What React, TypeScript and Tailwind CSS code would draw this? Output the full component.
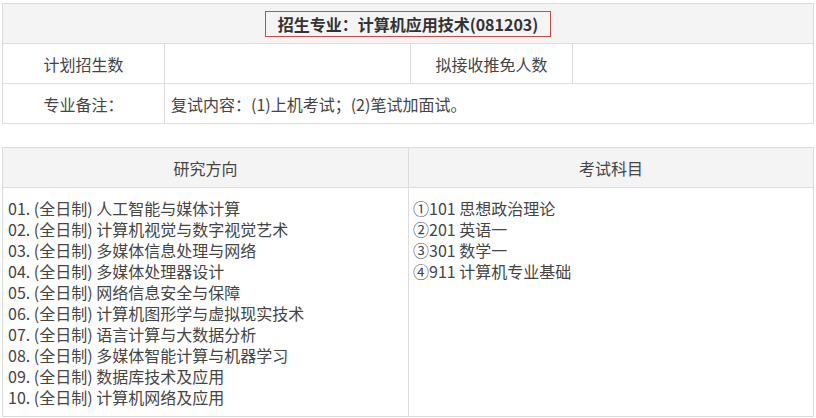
import React from "react";

const font = { fontFamily: '"Noto Sans CJK SC", "Noto Sans", sans-serif' };

const directions = [
  "01. (全日制) 人工智能与媒体计算",
  "02. (全日制) 计算机视觉与数字视觉艺术",
  "03. (全日制) 多媒体信息处理与网络",
  "04. (全日制) 多媒体处理器设计",
  "05. (全日制) 网络信息安全与保障",
  "06. (全日制) 计算机图形学与虚拟现实技术",
  "07. (全日制) 语言计算与大数据分析",
  "08. (全日制) 多媒体智能计算与机器学习",
  "09. (全日制) 数据库技术及应用",
  "10. (全日制) 计算机网络及应用",
];

const subjects = ["①101 思想政治理论", "②201 英语一", "③301 数学一", "④911 计算机专业基础"];

export default function App() {
  return (
    <div
      className="w-[816px] h-[418px] bg-white pl-[2px] pr-[2px] pt-[3px] text-[16px] text-[#444]"
      style={font}
    >
      {/* top table */}
      <div className="border border-[#dcdcdc]">
        <div className="h-[40px] bg-[#f4f4f4] flex items-center justify-center border-b border-[#dcdcdc]">
          <span className="border border-[#c0504d] h-[26px] px-[12px] flex items-center font-bold text-[#333] leading-none">
            招生专业：计算机应用技术(081203)
          </span>
        </div>
        <div className="h-[40px] grid grid-cols-[162px_246px_162px_1fr] border-b border-[#dcdcdc]">
          <div className="flex items-center justify-center border-r border-[#dcdcdc]">计划招生数</div>
          <div className="border-r border-[#dcdcdc]" />
          <div className="flex items-center justify-center border-r border-[#dcdcdc]">拟接收推免人数</div>
          <div />
        </div>
        <div className="h-[39px] grid grid-cols-[162px_1fr]">
          <div className="flex items-center justify-center border-r border-[#dcdcdc]">专业备注：</div>
          <div className="flex items-center pl-[6px]">复试内容：(1)上机考试；(2)笔试加面试。</div>
        </div>
      </div>

      {/* bottom table */}
      <div className="mt-[23px] border border-[#dcdcdc] grid grid-cols-[406px_1fr]">
        <div className="h-[40px] bg-[#f4f4f4] flex items-center justify-center border-r border-b border-[#dcdcdc]">
          研究方向
        </div>
        <div className="h-[40px] bg-[#f4f4f4] flex items-center justify-center border-b border-[#dcdcdc]">
          考试科目
        </div>
        <div className="border-r border-[#dcdcdc] pt-[10px] pb-[8px] pl-[5px] leading-[21px]">
          {directions.map((d) => (
            <div key={d}>{d}</div>
          ))}
        </div>
        <div className="pt-[10px] pl-[4px] leading-[21px]">
          {subjects.map((s) => (
            <div key={s}>{s}</div>
          ))}
        </div>
      </div>
    </div>
  );
}
